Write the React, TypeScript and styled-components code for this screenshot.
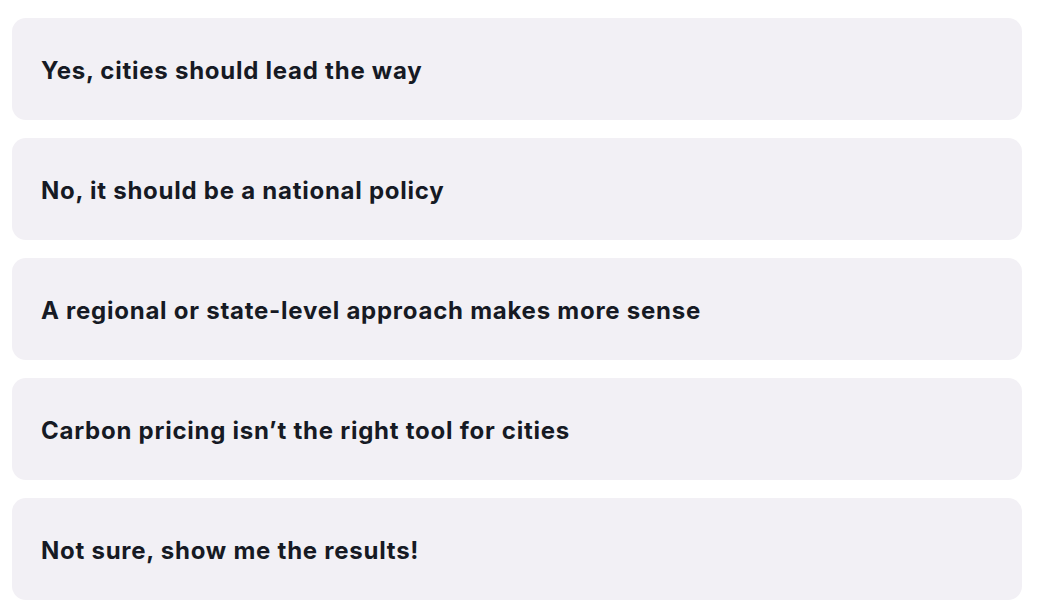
import React from "react"
import styled, {createGlobalStyle} from "styled-components"

const GlobalStyle = createGlobalStyle`
body {
  margin: 0;
  background: #ffffff;
  font-family: "Inter", "Liberation Sans", sans-serif;
}
`

const options = [
  "Yes, cities should lead the way",
  "No, it should be a national policy",
  "A regional or state-level approach makes more sense",
  "Carbon pricing isn\u2019t the right tool for cities",
  "Not sure, show me the results!",
]

//poll answers
const List = styled.div`
padding: 18px 18px 14px 12px;
display: flex;
flex-direction: column;
gap: 18px;
`

const Option = styled.button`
display: flex;
align-items: center;
height: 102px;
width: 100%;
padding: 2px 29px 0;
border: none;
border-radius: 14px;
background-color: #f2f0f5;
color: #161a24;
font-family: inherit;
font-size: 24px;
font-weight: 700;
letter-spacing: 0.75px;
text-align: left;
cursor: pointer;
`

const App = () => {
  return (
    <>
      <GlobalStyle />
      <List>
        {options.map(option => (
          <Option key={option}>{option}</Option>
        ))}
      </List>
    </>
  )
}

export default App
